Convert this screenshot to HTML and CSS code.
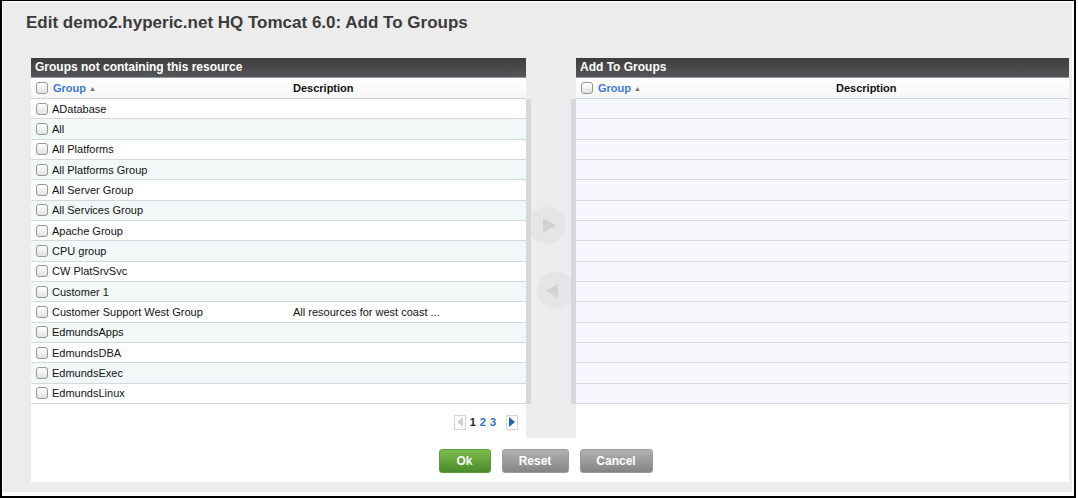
FILE: index.html
```html
<!DOCTYPE html>
<html>
<head>
<meta charset="utf-8">
<link rel="stylesheet" href="styles.css">
</head>
<body>
<div class="frame">
  <div class="dialog">
    <h1 class="title">Edit demo2.hyperic.net HQ Tomcat 6.0: Add To Groups</h1>
    <div class="sheet">
      <div class="columns">
        <section class="panel left">
          <div class="bar">Groups not containing this resource</div>
          <div class="head">
            <div class="name"><span class="cb"></span><span class="sort">Group</span><span class="arrow">&#9650;</span></div>
            <div class="desc">Description</div>
          </div>
          <div class="rows">
            <div class="row"><div class="name"><span class="cb"></span>ADatabase</div><div class="desc"></div></div>
            <div class="row"><div class="name"><span class="cb"></span>All</div><div class="desc"></div></div>
            <div class="row"><div class="name"><span class="cb"></span>All Platforms</div><div class="desc"></div></div>
            <div class="row"><div class="name"><span class="cb"></span>All Platforms Group</div><div class="desc"></div></div>
            <div class="row"><div class="name"><span class="cb"></span>All Server Group</div><div class="desc"></div></div>
            <div class="row"><div class="name"><span class="cb"></span>All Services Group</div><div class="desc"></div></div>
            <div class="row"><div class="name"><span class="cb"></span>Apache Group</div><div class="desc"></div></div>
            <div class="row"><div class="name"><span class="cb"></span>CPU group</div><div class="desc"></div></div>
            <div class="row"><div class="name"><span class="cb"></span>CW PlatSrvSvc</div><div class="desc"></div></div>
            <div class="row"><div class="name"><span class="cb"></span>Customer 1</div><div class="desc"></div></div>
            <div class="row"><div class="name"><span class="cb"></span>Customer Support West Group</div><div class="desc">All resources for west coast ...</div></div>
            <div class="row"><div class="name"><span class="cb"></span>EdmundsApps</div><div class="desc"></div></div>
            <div class="row"><div class="name"><span class="cb"></span>EdmundsDBA</div><div class="desc"></div></div>
            <div class="row"><div class="name"><span class="cb"></span>EdmundsExec</div><div class="desc"></div></div>
            <div class="row"><div class="name"><span class="cb"></span>EdmundsLinux</div><div class="desc"></div></div>
          </div>
          <div class="pager">
            <span class="pg-btn"><svg width="8" height="10" viewBox="0 0 8 10"><polygon points="7,0 7,10 1,5" fill="#cfcfcf"/></svg></span>
            <span class="pg-num current">1</span>
            <span class="pg-num">2</span>
            <span class="pg-num">3</span>
            <span class="pg-btn next"><svg width="8" height="10" viewBox="0 0 8 10"><polygon points="1,0 1,10 7,5" fill="#1b62b8"/></svg></span>
          </div>
        </section>
        <div class="mover">
          <div class="mover-track">
            <span class="strip"></span>
            <div class="mover-body">
              <span class="move-btn add"><svg width="13" height="15" viewBox="0 0 13 15"><polygon points="0,0 0,15 13,7.5" fill="#d2d2d2"/></svg></span>
              <span class="move-btn remove"><svg width="12" height="14" viewBox="0 0 12 14"><polygon points="12,0 12,14 0,7" fill="#d2d2d2"/></svg></span>
            </div>
            <span class="strip"></span>
          </div>
        </div>
        <section class="panel right">
          <div class="bar">Add To Groups</div>
          <div class="head">
            <div class="name"><span class="cb"></span><span class="sort">Group</span><span class="arrow">&#9650;</span></div>
            <div class="desc">Description</div>
          </div>
          <div class="rows">
            <div class="row"></div><div class="row"></div><div class="row"></div>
            <div class="row"></div><div class="row"></div><div class="row"></div>
            <div class="row"></div><div class="row"></div><div class="row"></div>
            <div class="row"></div><div class="row"></div><div class="row"></div>
            <div class="row"></div><div class="row"></div><div class="row"></div>
          </div>
        </section>
      </div>
      <div class="actions">
        <button class="btn ok">Ok</button>
        <button class="btn reset">Reset</button>
        <button class="btn cancel">Cancel</button>
      </div>
    </div>
  </div>
</div>
</body>
</html>
```
FILE: styles.css
```css
* { box-sizing: border-box; }
body {
  margin: 0;
  background: #fff;
  font-family: "Liberation Sans", Arial, sans-serif;
  color: #111;
}
.frame {
  box-sizing: content-box;
  width: 1069px;
  height: 490px;
  border: 2px solid #000;
  border-top-width: 1px;
  padding: 1px 2px 4px 1px;
  background: #fff;
}
.dialog {
  height: 490px;
  background: #ececec;
  padding: 0 3px 0 23px;
}
.title {
  margin: 0;
  padding-top: 11px;
  font-size: 17px;
  line-height: 20px;
  font-weight: bold;
  color: #3b3b3b;
}
.sheet {
  margin-top: 25px;
  margin-left: 5px;
  width: 1038px;
  height: 424px;
  background: #fff;
}
.columns {
  display: flex;
  height: 380px;
}
.panel {
  display: flex;
  flex-direction: column;
}
.panel.left { width: 495px; }
.panel.right { width: 493px; }
.bar {
  height: 20px;
  background: linear-gradient(#3e3e3e, #555);
  border-bottom: 1px solid #8f98a8;
  color: #fff;
  font-size: 12px;
  font-weight: bold;
  line-height: 19px;
  padding-left: 4px;
}
.head, .row {
  display: grid;
  align-items: center;
  padding-left: 5px;
  font-size: 11px;
}
.left .head, .left .row { grid-template-columns: 257px 1fr; }
.right .head, .right .row { grid-template-columns: 255px 1fr; }
.head {
  height: 21px;
  background: linear-gradient(#fff, #f6f6f6);
  border-bottom: 1px solid #c9d3e2;
  font-weight: bold;
}
.name {
  display: flex;
  align-items: center;
  gap: 4px;
  white-space: nowrap;
}
.head .name { gap: 5px; }
.sort { color: #3b7ad6; }
.arrow {
  font-size: 7px;
  color: #6f6f6f;
  margin-left: -2px;
}
.cb {
  width: 12px;
  height: 12px;
  border: 1px solid #979797;
  border-radius: 3px;
  background: linear-gradient(#fff, #e2e2e2);
  flex: none;
}
.row {
  height: 20.333px;
  border-bottom: 1px solid #d6d9dc;
  background: #fff;
}
.left .row:nth-child(even) { background: #f2f8f8; }
.right .row { background: #f6f7fd; }
.pager {
  display: flex;
  align-items: center;
  justify-content: flex-end;
  padding: 11px 8px 0 0;
  font-size: 11px;
  font-weight: bold;
}
.pg-btn {
  width: 12px;
  height: 15px;
  border: 1px solid #d6d6d6;
  background: #fff;
  display: flex;
  align-items: center;
  justify-content: center;
}
.pg-btn.next { margin-left: 10px; }
.pg-num {
  color: #2f6ec8;
  margin-left: 4px;
  line-height: 14px;
}
.pg-num.current { color: #222; }
.mover {
  width: 50px;
  background: #ececec;
  padding-top: 41px;
}
.mover-track {
  display: flex;
  height: 305px;
}
.strip {
  width: 5px;
  background: #d4d7dd;
}
.mover-body {
  width: 40px;
  overflow: hidden;
  display: flex;
  flex-direction: column;
  padding-top: 108px;
  gap: 28px;
}
.move-btn {
  width: 38px;
  height: 37px;
  border-radius: 50%;
  background: #e5e5e5;
  display: flex;
  align-items: center;
  justify-content: center;
  flex: none;
}
.move-btn.add { margin-left: -3px; padding-left: 4px; }
.move-btn.remove { margin-left: 6px; padding-right: 8px; }
.actions {
  height: 44px;
  display: flex;
  justify-content: center;
  align-items: flex-start;
  gap: 11px;
  padding: 11px 9px 0 0;
}
.btn {
  height: 24px;
  border-radius: 3px;
  color: #fff;
  font-family: "Liberation Sans", Arial, sans-serif;
  font-size: 12px;
  font-weight: bold;
  border: 1px solid #9c9c9c;
  background: linear-gradient(#b2b2b2, #848484);
  padding: 0;
}
.btn.ok {
  width: 52px;
  border-color: #5c9a3c;
  background: linear-gradient(#7cbc4c, #4a8a2a);
}
.btn.reset { width: 67px; }
.btn.cancel { width: 73px; }
```
